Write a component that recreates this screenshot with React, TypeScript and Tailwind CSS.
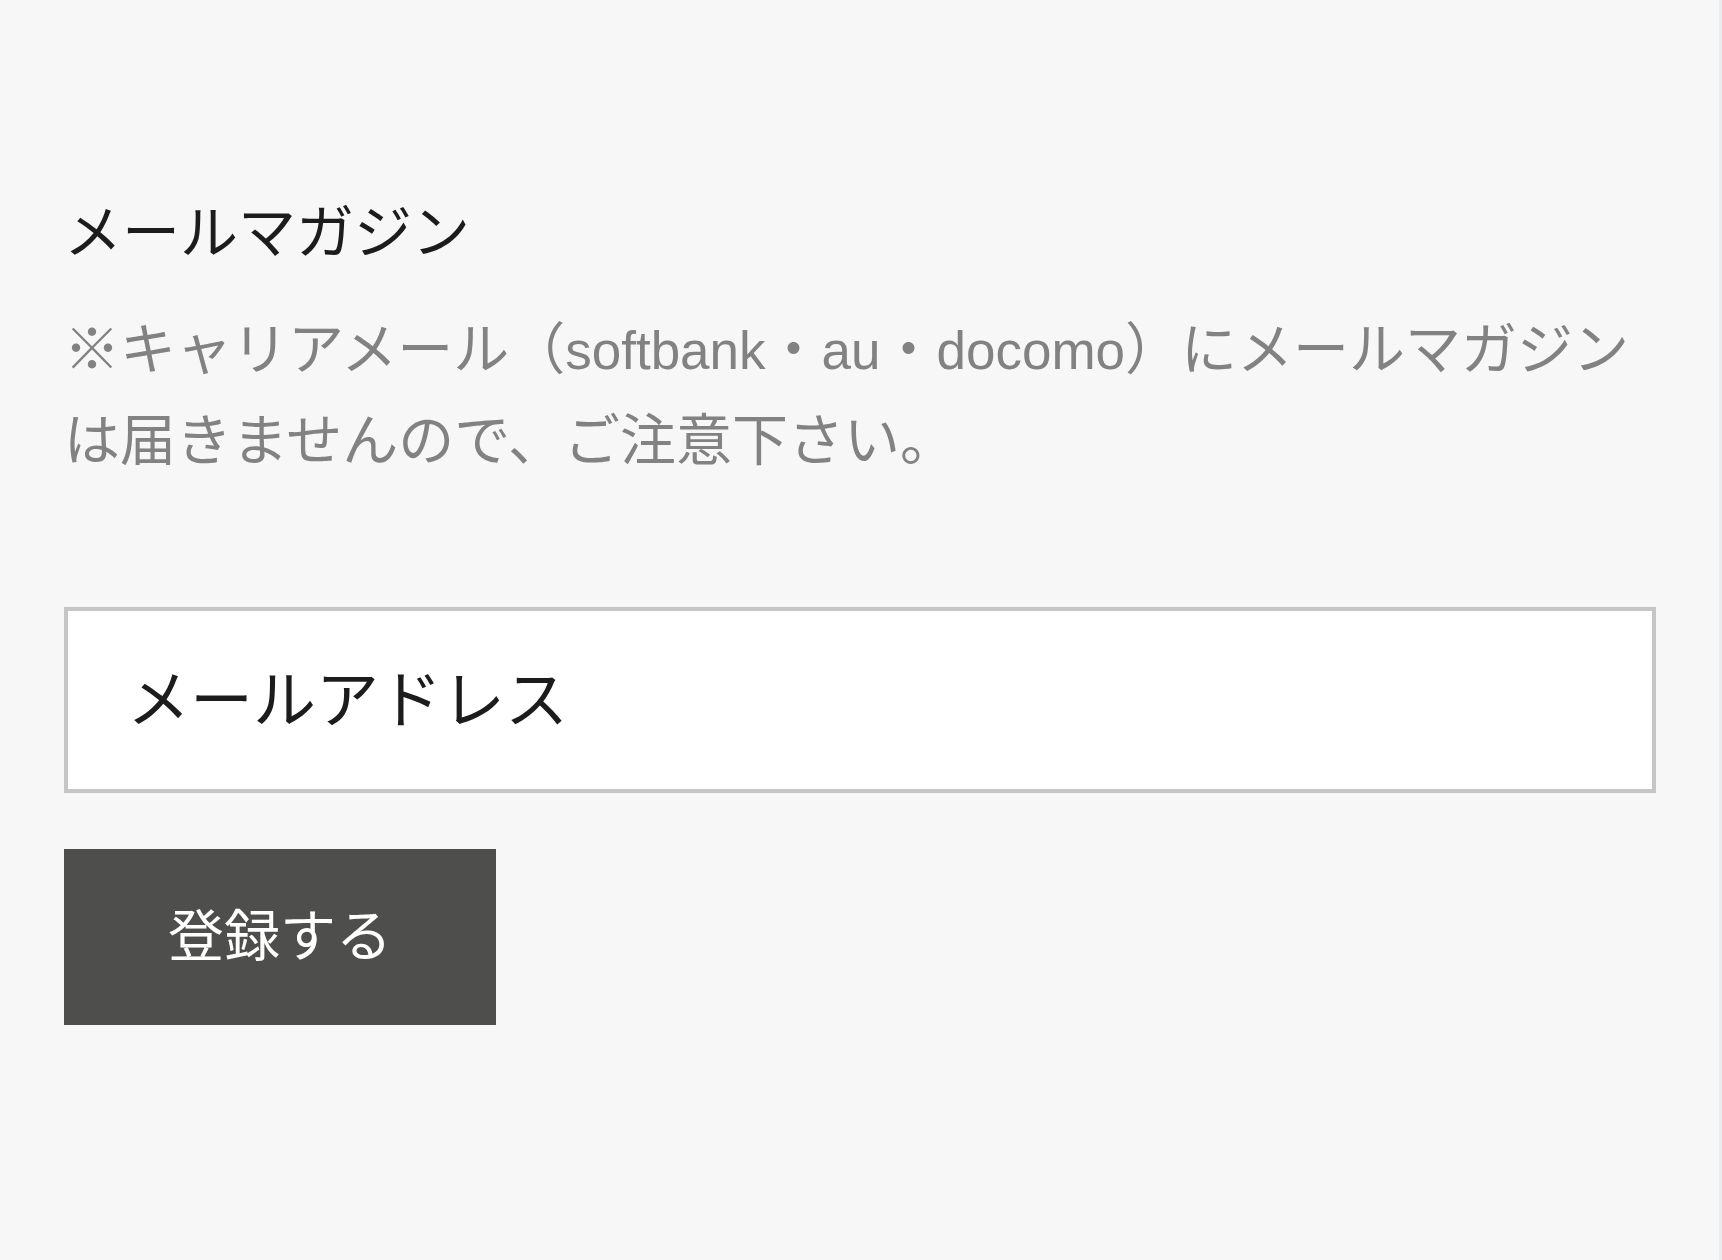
import React from "react";

export default function App() {
  return (
    <div className="flex min-h-[1260px] w-full bg-[#f7f7f7] font-['Liberation_Sans','Noto_Sans_CJK_JP',sans-serif]">
      <div className="flex-1 pl-[64px] pr-[63px] pt-[201px]">
        <h2 className="text-[58px] leading-[64px] font-normal text-[#1c1c1c]">メールマガジン</h2>
        <p className="mt-[40px] text-[56px] leading-[90px] text-[#828282]">
          ※キャリアメール（<span className="text-[53px]">softbank</span>・<span className="text-[53px]">au</span>・<span className="text-[53px]">docomo</span>）にメールマガジン
          <br />
          は届きませんので、ご注意下さい。
        </p>
        <input
          type="email"
          placeholder="メールアドレス"
          className="mt-[121px] block h-[186px] w-full border-4 border-[#c6c6c6] bg-white pl-[59px] text-[63px] text-[#1c1c1c] outline-none placeholder:text-[#1c1c1c]"
        />
        <button
          type="button"
          className="mt-[56px] flex h-[176px] w-[432px] items-center justify-center bg-[#4e4e4c] text-[56px] leading-none text-white"
        >
          登録する
        </button>
      </div>
      <div className="w-[3px] bg-[#eaecf0]" />
    </div>
  );
}
